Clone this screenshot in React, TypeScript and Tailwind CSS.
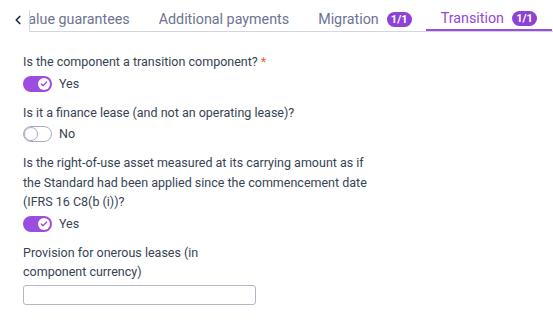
import { Check, ChevronLeft } from "lucide-react"

const tabs = [
  { label: "Value guarantees" },
  { label: "Additional payments" },
  { label: "Migration", badge: "1/1" },
  { label: "Transition", badge: "1/1", active: true },
]

function Toggle({ on, label }: { on: boolean; label: string }) {
  return (
    <div className="mt-[4px] flex h-[16px] items-center gap-[7px]">
      {on ? (
        <div className="flex h-[16px] w-[29px] items-center justify-end rounded-full bg-[#9b4ddf] pr-[2px]">
          <div className="flex h-[12px] w-[12px] items-center justify-center rounded-full bg-white">
            <Check className="h-[8px] w-[8px] text-[#9b4ddf]" strokeWidth={4} />
          </div>
        </div>
      ) : (
        <div className="flex h-[16px] w-[29px] items-center rounded-full border border-[#a9acc0] bg-white">
          <div className="h-[14px] w-[14px] rounded-full border border-[#a9acc0] bg-white" />
        </div>
      )}
      <span className="text-[12.5px] text-[#364353]">{label}</span>
    </div>
  )
}

export default function App() {
  return (
    <div className="h-[326px] w-[553px] overflow-hidden bg-white" style={{ fontFamily: "Roboto, 'Noto Sans', sans-serif" }}>
      <div className="flex pt-[10px]">
        <div className="flex w-[29px] items-center justify-center pl-[6px] pb-[2px] text-[#1f2b40]">
          <ChevronLeft className="h-[14px] w-[14px]" strokeWidth={3} />
        </div>
        <div className="flex-1 overflow-hidden border-l border-b border-[#d3d5e0]">
          <div className="-ml-[25px] flex h-[21px] whitespace-nowrap">
            {tabs.map((t) => (
              <div
                key={t.label}
                className={`flex items-center px-[14.5px] pb-[2px] text-[14.3px] ${
                  t.active ? "border-b-2 border-[#9b4ddf] text-[#9447d8]" : "text-[#6d7391]"
                }`}
              >
                <span className="leading-none">{t.label}</span>
                {t.badge && (
                  <span className="ml-[8px] flex h-[15px] w-[25px] items-center justify-center rounded-full bg-[#8e41d6] text-[11px] font-bold leading-none text-white">
                    {t.badge}
                  </span>
                )}
              </div>
            ))}
          </div>
        </div>
      </div>

      <div className="flex flex-col px-[23px] pt-[20px] text-[12.5px] leading-[19.5px] text-[#364353]">
        <div>
          Is the component a transition component? <span className="text-[#e8603c]">*</span>
        </div>
        <Toggle on label="Yes" />

        <div className="mt-[11px]">Is it a finance lease (and not an operating lease)?</div>
        <Toggle on={false} label="No" />

        <div className="mt-[11px] max-w-[355px]">
          Is the right-of-use asset measured at its carrying amount as if the Standard had been applied since the
          commencement date (IFRS 16 C8(b (i))?
        </div>
        <Toggle on label="Yes" />

        <div className="mt-[11px] w-[233px]">Provision for onerous leases (in component currency)</div>
        <input className="mt-[3px] h-[20px] w-[233px] rounded-[3px] border border-[#b4b7c6] bg-white outline-none" />
      </div>
    </div>
  )
}
